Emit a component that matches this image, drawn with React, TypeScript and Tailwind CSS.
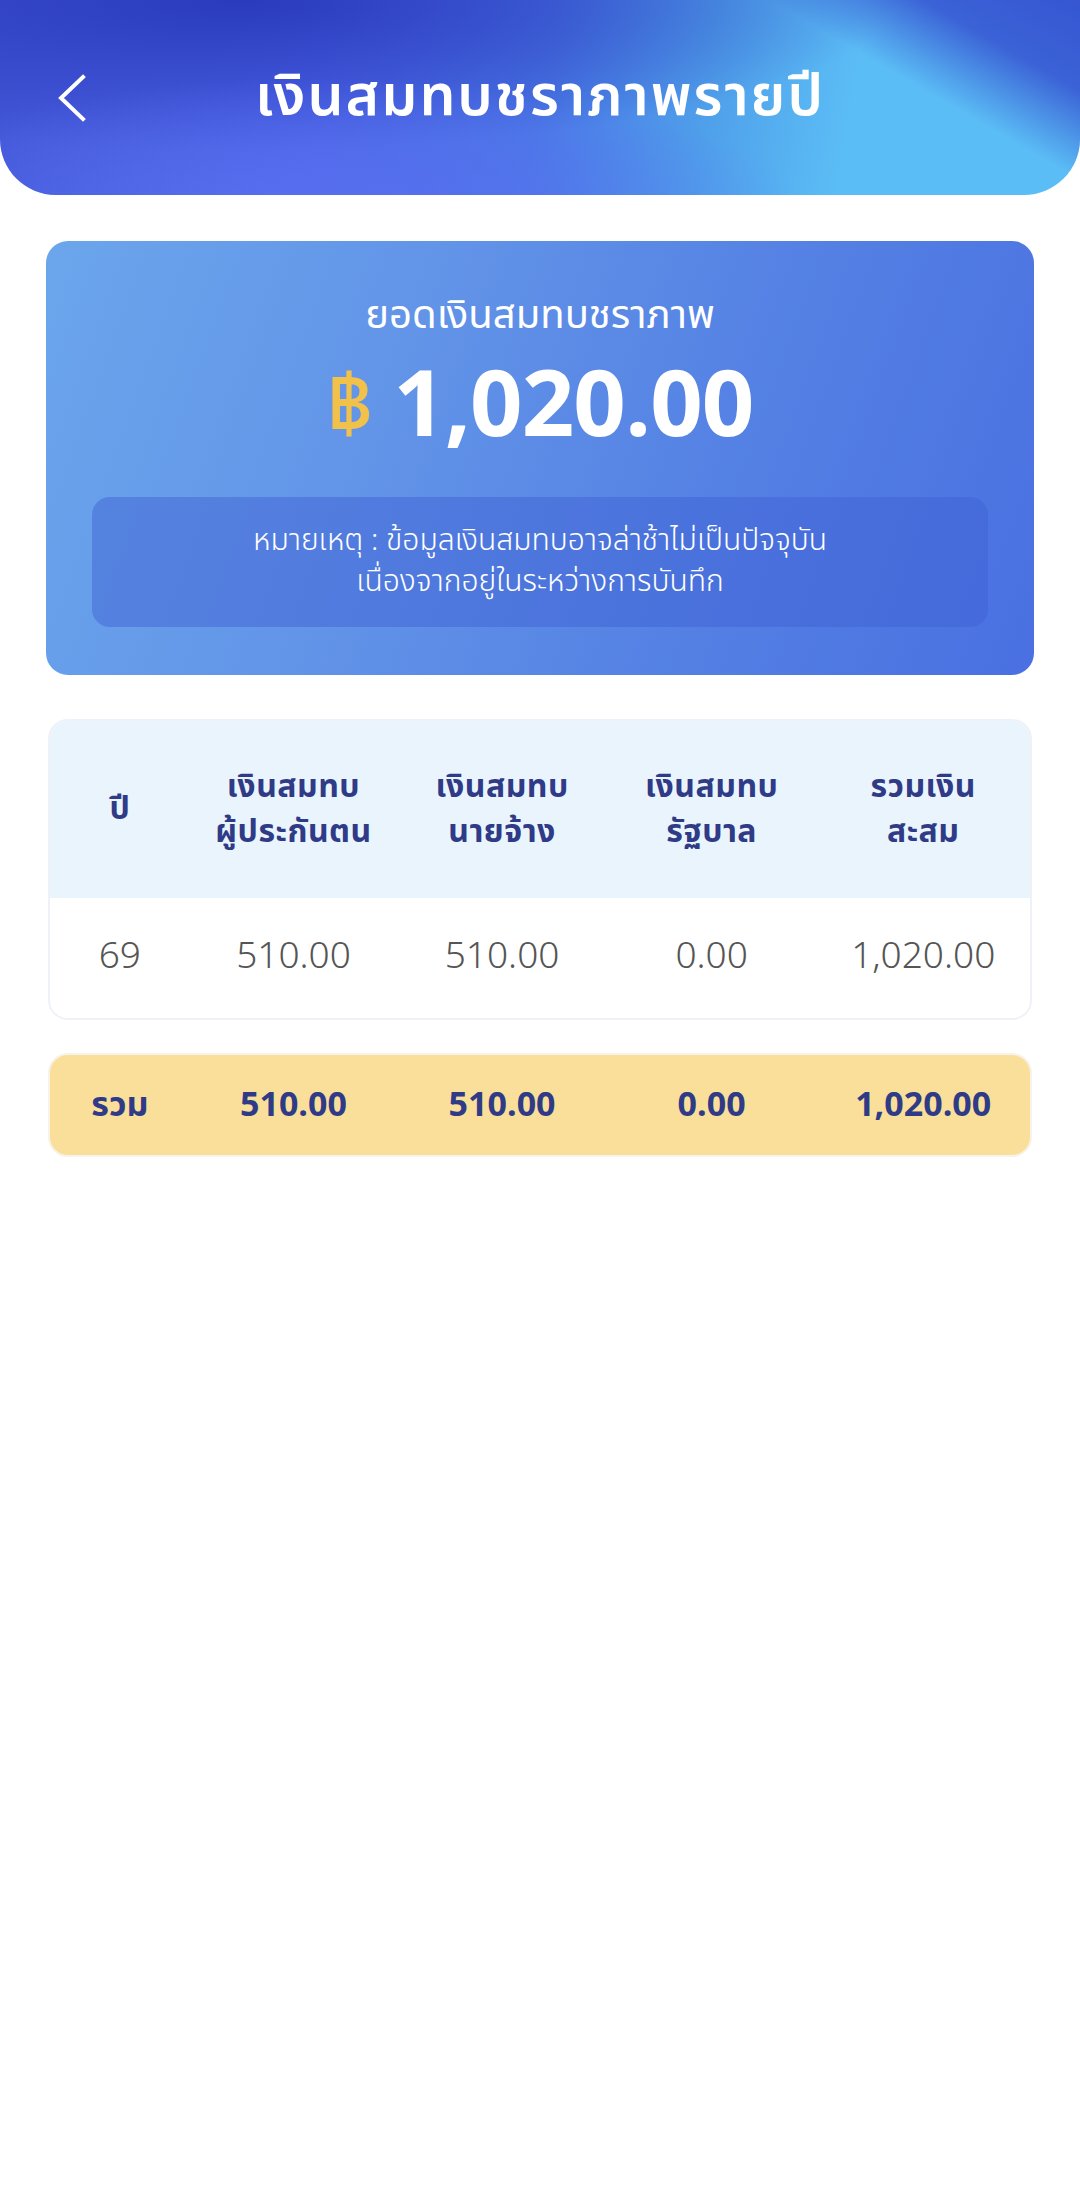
const font = { fontFamily: '"Noto Sans Thai", "Noto Sans", "Liberation Sans", sans-serif' };

type Row = {
  year: string;
  insured: string;
  employer: string;
  government: string;
  total: string;
};

const rows: Row[] = [
  { year: "69", insured: "510.00", employer: "510.00", government: "0.00", total: "1,020.00" },
];

const headers = [
  ["ปี"],
  ["เงินสมทบ", "ผู้ประกันตน"],
  ["เงินสมทบ", "นายจ้าง"],
  ["เงินสมทบ", "รัฐบาล"],
  ["รวมเงิน", "สะสม"],
];

const cols = "grid grid-cols-[140fr_208fr_210fr_210fr_214fr]";

export default function App() {
  return (
    <div className="min-h-[2203px] w-full bg-white" style={font}>
      <header className="relative h-[195px] overflow-hidden rounded-b-[56px] bg-[linear-gradient(100deg,#4257d6_0%,#4d64e8_30%,#4a78e6_50%,#4f9fea_65%,#5bbdf5_78%,#5bbdf5_100%)]">
        <div className="absolute inset-0 bg-[radial-gradient(ellipse_at_22%_0%,#2a3bbd_0%,#2a3bbd00_55%)]" />
        <div className="absolute inset-0 bg-[radial-gradient(ellipse_at_30%_110%,#5870f0_0%,#5870f000_45%)]" />
        <div className="absolute inset-0 bg-[linear-gradient(30deg,#3a5fd400_78%,#3b62d6_89%,#3656d2_100%)]" />
        <div className="relative grid h-full grid-cols-[1fr_auto_1fr] items-center">
          <button className="ml-[56px] flex h-[60px] w-[40px] items-center text-white">
            <svg width="32" height="48" viewBox="0 0 32 48" fill="none">
              <path d="M27 3 L5 24 L27 45" stroke="currentColor" strokeWidth="4" strokeLinecap="square" />
            </svg>
          </button>
          <h1 className="text-[57px] font-semibold leading-[64px] tracking-[2px] text-white">เงินสมทบชราภาพรายปี</h1>
          <div />
        </div>
      </header>

      <main className="px-[46px] pt-[46px]">
        <section className="rounded-[22px] bg-[linear-gradient(110deg,#6ba6ec_0%,#6294e8_35%,#5582e4_65%,#4a70e1_100%)] px-[46px] pb-[48px] pt-[48px] text-center text-white">
          <p className="text-[40px] leading-[54px]">ยอดเงินสมทบชราภาพ</p>
          <p className="mt-[15px] flex items-center justify-center gap-[20px] leading-[100px]">
            <span className="text-[80px] font-medium text-[#f2c14a]">฿</span>
            <span className="text-[92px] font-bold tracking-[-1px]">1,020.00</span>
          </p>
          <div className="mt-[39px] rounded-[18px] bg-[#3d5fd3]/45 px-6 py-[24px] text-[30px] font-light leading-[41px]">
            <p>หมายเหตุ : ข้อมูลเงินสมทบอาจล่าช้าไม่เป็นปัจจุบัน</p>
            <p>เนื่องจากอยู่ในระหว่างการบันทึก</p>
          </div>
        </section>

        <div className="mx-[2px] mt-[44px] overflow-hidden rounded-[20px] border-2 border-[#eef2f8]">
          <div className={`${cols} h-[177px] items-center bg-[#eaf4fd] text-center text-[32px] font-bold leading-[45px] tracking-[0.5px] text-[#2f3b86]`}>
            {headers.map((lines, i) => (
              <div key={i}>
                {lines.map((l) => (
                  <p key={l}>{l}</p>
                ))}
              </div>
            ))}
          </div>
          {rows.map((r) => (
            <div
              key={r.year}
              className={`${cols} h-[120px] items-center bg-white text-center text-[37px] font-light text-[#555555]`}
            >
              <span>{r.year}</span>
              <span>{r.insured}</span>
              <span>{r.employer}</span>
              <span>{r.government}</span>
              <span>{r.total}</span>
            </div>
          ))}
        </div>

        <div
          className={`${cols} mx-[2px] mt-[33px] h-[104px] items-center rounded-[20px] border-2 border-[#f7f3ea] bg-[#f9df9a] text-center text-[34px] font-bold text-[#2f3b86]`}
        >
          <span>รวม</span>
          <span>510.00</span>
          <span>510.00</span>
          <span>0.00</span>
          <span>1,020.00</span>
        </div>
      </main>
    </div>
  );
}
